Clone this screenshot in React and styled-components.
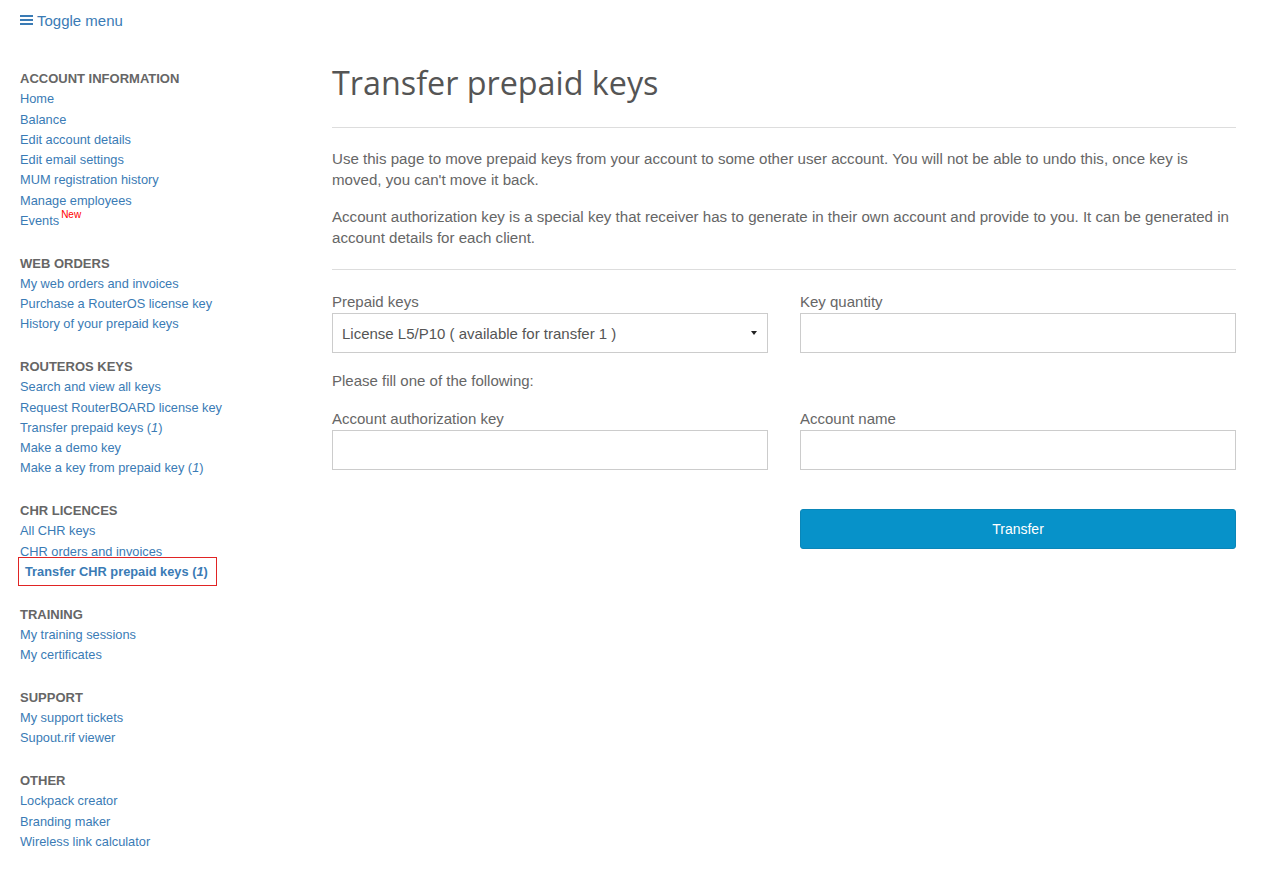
import React from "react";
import styled, { createGlobalStyle } from "styled-components";

const Global = createGlobalStyle`
  html, body { margin: 0; padding: 0; background: #fff; }
  body { font-family: "Liberation Sans", Arial, sans-serif; color: #666; }
  * { box-sizing: border-box; }
`;

const Page = styled.div`
  width: 1280px;
  min-height: 871px;
  padding: 0 44px 0 20px;
`;

const TopBar = styled.div`
  height: 42px;
  display: flex;
  align-items: center;
  padding-bottom: 2px;
`;

const Toggle = styled.a`
  display: inline-flex;
  align-items: center;
  gap: 3px;
  color: #3a7bb5;
  font-size: 15px;
  text-decoration: none;
  cursor: pointer;
`;

const Layout = styled.div`
  display: grid;
  grid-template-columns: 312px 1fr;
`;

const Sidebar = styled.nav`
  padding-top: 27px;
`;

const Section = styled.div`
  margin-bottom: 22.5px;
`;

const Heading = styled.div`
  font-size: 13px;
  font-weight: bold;
  color: #666;
  line-height: 20.25px;
  text-transform: uppercase;
`;

const NavLink = styled.a`
  display: block;
  font-size: 12.8px;
  line-height: 20.25px;
  color: #3a7bb5;
  text-decoration: none;
  cursor: pointer;
`;

const ActiveRow = styled.div`
  font-size: 12.8px;
  line-height: 20.25px;
`;

const ActiveLink = styled.a`
  display: inline;
  font-weight: bold;
  color: #3a7bb5;
  text-decoration: none;
  border: 1px solid #e02424;
  padding: 6px 8px 6px 6px;
  margin-left: -2px;
  cursor: pointer;
`;

const Num = styled.i``;

const NewBadge = styled.sup`
  color: #f00;
  font-size: 10px;
  vertical-align: top;
  position: relative;
  top: -6px;
  margin-left: 2px;
`;

const Main = styled.main`
  padding-top: 17px;
`;

const Title = styled.h1`
  font-family: "Open Sans", sans-serif;
  font-weight: 400;
  font-size: 32.3px;
  color: #555;
  margin: 0;
  line-height: 46px;
  padding-bottom: 22px;
  border-bottom: 1px solid #ddd;
`;

const Intro = styled.div`
  padding: 20px 0 21px;
  border-bottom: 1px solid #ddd;
`;

const Para = styled.p`
  font-size: 15.1px;
  line-height: 21px;
  margin: 0 0 16px;
  &:last-child { margin-bottom: 0; }
`;

const Form = styled.form`
  padding-top: 21px;
  display: grid;
  grid-template-columns: 1fr 1fr;
  column-gap: 32px;
`;

const Field = styled.div`
  display: flex;
  flex-direction: column;
`;

const Label = styled.label`
  font-size: 15px;
  line-height: 21px;
  margin-bottom: 1px;
`;

const Note = styled.div`
  grid-column: 1 / -1;
  font-size: 15px;
  line-height: 21px;
  padding: 17px 0 17px;
`;

const Input = styled.input`
  height: 40px;
  border: 1px solid #ccc;
  font-size: 15px;
  padding: 0 9px;
  font-family: inherit;
  color: #555;
  outline: none;
`;

const SelectBox = styled.div`
  height: 40px;
  border: 1px solid #ccc;
  display: flex;
  align-items: center;
  justify-content: space-between;
  padding: 0 10px 0 9px;
  font-size: 15px;
  color: #555;
`;

const Caret = styled.span`
  width: 0;
  height: 0;
  border-left: 3.5px solid transparent;
  border-right: 3.5px solid transparent;
  border-top: 4px solid #222;
`;

const ButtonCell = styled.div`
  grid-column: 2;
  padding-top: 39px;
`;

const Button = styled.button`
  width: 100%;
  height: 40px;
  background: #0792c9;
  border: 1px solid #0a86b8;
  border-radius: 3px;
  color: #fff;
  font-family: inherit;
  font-size: 14px;
  cursor: pointer;
`;

const Hamburger = () => (
  <svg width="14" height="12" viewBox="0 0 14 12">
    <rect x="0" y="1" width="13" height="2" fill="#3a7bb5" />
    <rect x="0" y="5" width="13" height="2" fill="#3a7bb5" />
    <rect x="0" y="9" width="13" height="2" fill="#3a7bb5" />
  </svg>
);

export default function App() {
  return (
    <>
      <Global />
      <Page>
        <TopBar>
          <Toggle>
            <Hamburger />
            Toggle menu
          </Toggle>
        </TopBar>
        <Layout>
          <Sidebar>
            <Section>
              <Heading>Account information</Heading>
              <NavLink>Home</NavLink>
              <NavLink>Balance</NavLink>
              <NavLink>Edit account details</NavLink>
              <NavLink>Edit email settings</NavLink>
              <NavLink>MUM registration history</NavLink>
              <NavLink>Manage employees</NavLink>
              <NavLink>
                Events<NewBadge>New</NewBadge>
              </NavLink>
            </Section>
            <Section>
              <Heading>Web orders</Heading>
              <NavLink>My web orders and invoices</NavLink>
              <NavLink>Purchase a RouterOS license key</NavLink>
              <NavLink>History of your prepaid keys</NavLink>
            </Section>
            <Section>
              <Heading>RouterOS keys</Heading>
              <NavLink>Search and view all keys</NavLink>
              <NavLink>Request RouterBOARD license key</NavLink>
              <NavLink>
                Transfer prepaid keys (<Num>1</Num>)
              </NavLink>
              <NavLink>Make a demo key</NavLink>
              <NavLink>
                Make a key from prepaid key (<Num>1</Num>)
              </NavLink>
            </Section>
            <Section>
              <Heading>CHR licences</Heading>
              <NavLink>All CHR keys</NavLink>
              <NavLink>CHR orders and invoices</NavLink>
              <ActiveRow>
                <ActiveLink>
                  Transfer CHR prepaid keys (<Num>1</Num>)
                </ActiveLink>
              </ActiveRow>
            </Section>
            <Section>
              <Heading>Training</Heading>
              <NavLink>My training sessions</NavLink>
              <NavLink>My certificates</NavLink>
            </Section>
            <Section>
              <Heading>Support</Heading>
              <NavLink>My support tickets</NavLink>
              <NavLink>Supout.rif viewer</NavLink>
            </Section>
            <Section>
              <Heading>Other</Heading>
              <NavLink>Lockpack creator</NavLink>
              <NavLink>Branding maker</NavLink>
              <NavLink>Wireless link calculator</NavLink>
            </Section>
          </Sidebar>
          <Main>
            <Title>Transfer prepaid keys</Title>
            <Intro>
              <Para>
                Use this page to move prepaid keys from your account to some other user account. You will not be able to undo this, once key is moved, you can't move it back.
              </Para>
              <Para>
                Account authorization key is a special key that receiver has to generate in their own account and provide to you. It can be generated in account details for each client.
              </Para>
            </Intro>
            <Form onSubmit={(e) => e.preventDefault()}>
              <Field>
                <Label>Prepaid keys</Label>
                <SelectBox>
                  License L5/P10 ( available for transfer 1 )
                  <Caret />
                </SelectBox>
              </Field>
              <Field>
                <Label>Key quantity</Label>
                <Input />
              </Field>
              <Note>Please fill one of the following:</Note>
              <Field>
                <Label>Account authorization key</Label>
                <Input />
              </Field>
              <Field>
                <Label>Account name</Label>
                <Input />
              </Field>
              <ButtonCell>
                <Button type="submit">Transfer</Button>
              </ButtonCell>
            </Form>
          </Main>
        </Layout>
      </Page>
    </>
  );
}
